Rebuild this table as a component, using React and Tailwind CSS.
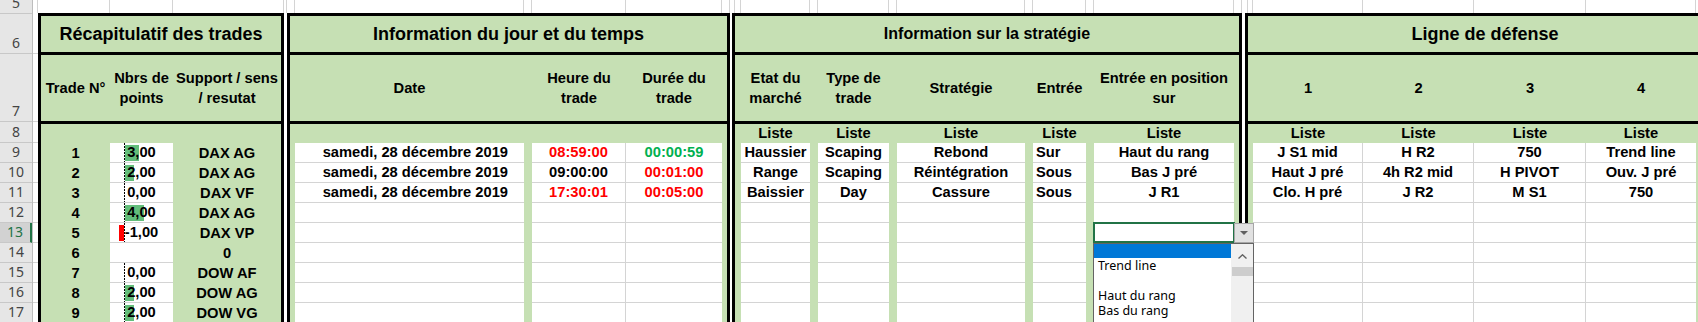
import React from "react";

const rowHeads = [
  ["5", "h-[14px]"],
  ["6", "h-[40px]"],
  ["7", "h-[68px]"],
  ["8", "h-[21px]"],
  ["9", "h-[20px]"],
  ["10", "h-[20px]"],
  ["11", "h-[20px]"],
  ["12", "h-[20px]"],
  ["13", "h-[20px]"],
  ["14", "h-[20px]"],
  ["15", "h-[20px]"],
  ["16", "h-[20px]"],
  ["17", "h-[20px]"],
];

// row 5 cells, one per sheet column
const strip = [
  "w-[5px]", "w-[72px]", "w-[63px]", "w-[111px]", "w-[3px]", "w-[8px]", "w-[229px]", "w-[8px]",
  "w-[94px]", "w-[96px]", "w-[8px]", "w-[5px]", "w-[6px]", "w-[69px]", "w-[8px]", "w-[71px]",
  "w-[8px]", "w-[128px]", "w-[8px]", "w-[53px]", "w-[8px]", "w-[140px]", "w-[8px]", "w-[6px]",
  "w-[5px]", "w-[110px]", "w-[111px]", "w-[112px]", "w-[110px]", "w-[40px]",
];

const trades = [
  [1, 3, "DAX AG"],
  [2, 2, "DAX AG"],
  [3, 0, "DAX VF"],
  [4, 4, "DAX AG"],
  [5, -1, "DAX VP"],
  [6, null, "0"],
  [7, 0, "DOW AF"],
  [8, 2, "DOW AG"],
  [9, 2, "DOW VG"],
];

const red = (t) => <span className="text-[#FF0000]">{t}</span>;
const green = (t) => <span className="text-[#00B050]">{t}</span>;

const empty = (n) => Array.from({ length: n }, () => []);

function PointsCell({ v }) {
  const w = Math.round(Math.abs(v) * 4.7);
  return (
    <>
      <svg className="absolute left-0 top-0" width="63" height="19">
        {v !== 0 && (
          <rect x={v > 0 ? 15 : 14 - w} y="2" width={w} height="16" fill={v > 0 ? "#63BE7B" : "#FF0000"} />
        )}
        <line x1="14.5" y1="0" x2="14.5" y2="19" stroke="#000" strokeDasharray="2 1" />
      </svg>
      <span className="relative">{v.toFixed(2).replace(".", ",")}</span>
    </>
  );
}

function Dropdown() {
  return (
    <>
      <div className="absolute -left-px -top-px w-[142px] h-[21px] border-2 border-[#217346] z-10" />
      <div className="absolute left-[140px] top-0 w-[20px] h-[20px] bg-[#e1e1e1] border border-[#a6a6a6] z-10 flex items-center justify-center">
        <svg width="8" height="5" viewBox="0 0 8 5">
          <path d="M0 0h8L4 4z" fill="#5f5f5f" />
        </svg>
      </div>
      <div className="absolute -left-px top-[20px] w-[161px] h-[110px] bg-white border border-[#646464] z-20 flex font-['Noto_Sans',sans-serif] font-normal text-[12.5px] leading-[15px] text-black">
        <div className="flex-1 flex flex-col">
          <div className="h-[14px] bg-[#0078D7]" />
          <div className="h-[15px] pl-[4px]">Trend line</div>
          <div className="h-[15px]" />
          <div className="h-[15px] pl-[4px]">Haut du rang</div>
          <div className="h-[15px] pl-[4px]">Bas du rang</div>
        </div>
        <div className="w-[22px] bg-[#f0f0f0] flex flex-col items-center pt-[10px]">
          <svg width="9" height="5" viewBox="0 0 9 5">
            <path d="M0.5 4.5L4.5 0.8L8.5 4.5" fill="none" stroke="#606060" strokeWidth="1.4" />
          </svg>
          <div className="mt-[8px] w-[21px] h-[9px] bg-[#cdcdcd]" />
        </div>
      </div>
    </>
  );
}

function Cell({ col, v }) {
  const bg = col.white ? `bg-white border-b border-[#d4d4d4] ${col.sep ? "border-r" : ""}` : "";
  const align = col.left ? "justify-start pl-[3px]" : col.right ? "justify-end pr-[16px]" : "justify-center";
  return (
    <div className={`${col.w} shrink-0 h-[20px] relative flex items-center leading-[19px] whitespace-nowrap ${align} ${bg}`}>
      {v}
    </div>
  );
}

function Section({ boxCls, title, titleCls, cols, heads, liste, rows }) {
  return (
    <div className={`shrink-0 flex flex-col border-[3px] border-black bg-[#C6E0B4] ${boxCls}`}>
      <div className={`h-[39px] shrink-0 flex items-center justify-center border-b-[3px] border-black ${titleCls}`}>
        {title}
      </div>
      <div className="h-[69px] shrink-0 flex border-b-[3px] border-black">
        {cols.map((c, i) => (
          <div key={i} className={`${c.w} shrink-0 flex items-center justify-center text-center leading-[20px] whitespace-nowrap`}>
            {heads[i]}
          </div>
        ))}
      </div>
      <div className="h-[19px] shrink-0 flex">
        {cols.map((c, i) => (
          <div key={i} className={`${c.w} shrink-0 flex items-center justify-center leading-[19px]`}>
            {liste && c.white ? "Liste" : null}
          </div>
        ))}
      </div>
      {rows.map((r, ri) => (
        <div key={ri} className="h-[20px] shrink-0 flex">
          {cols.map((c, i) => (
            <Cell key={i} col={c} v={r[i]} />
          ))}
        </div>
      ))}
    </div>
  );
}

function Gutter({ w }) {
  return (
    <div className={`${w} shrink-0 flex flex-col bg-white`}>
      <div className="h-[41px] border-b border-[#d4d4d4]" />
      <div className="h-[68px] border-b border-[#d4d4d4]" />
      <div className="h-[21px] border-b border-[#d4d4d4]" />
      {Array.from({ length: 9 }).map((_, i) => (
        <div key={i} className="h-[20px] border-b border-[#d4d4d4]" />
      ))}
    </div>
  );
}

const s1Cols = [{ w: "w-[69px]" }, { w: "w-[63px]", white: true }, { w: "w-[108px]" }];

const s2Cols = [
  { w: "w-[5px]" },
  { w: "w-[229px]", white: true, right: true },
  { w: "w-[8px]" },
  { w: "w-[94px]", white: true, sep: true },
  { w: "w-[96px]", white: true },
  { w: "w-[5px]" },
];

const s3Cols = [
  { w: "w-[6px]" },
  { w: "w-[69px]", white: true },
  { w: "w-[8px]" },
  { w: "w-[71px]", white: true },
  { w: "w-[8px]" },
  { w: "w-[128px]", white: true },
  { w: "w-[8px]" },
  { w: "w-[53px]", white: true, left: true },
  { w: "w-[8px]" },
  { w: "w-[140px]", white: true },
  { w: "w-[5px]" },
];

const s4Cols = [
  { w: "w-[5px]" },
  { w: "w-[110px]", white: true, sep: true },
  { w: "w-[111px]", white: true, sep: true },
  { w: "w-[112px]", white: true, sep: true },
  { w: "w-[110px]", white: true },
  { w: "w-[26px]" },
];

const date = "samedi, 28 décembre 2019";

const s2Rows = [
  [null, date, null, red("08:59:00"), green("00:00:59")],
  [null, date, null, "09:00:00", red("00:01:00")],
  [null, date, null, red("17:30:01"), red("00:05:00")],
  ...empty(6),
];

const s3Rows = [
  [null, "Haussier", null, "Scaping", null, "Rebond", null, "Sur", null, "Haut du rang"],
  [null, "Range", null, "Scaping", null, "Réintégration", null, "Sous", null, "Bas J pré"],
  [null, "Baissier", null, "Day", null, "Cassure", null, "Sous", null, "J R1"],
  [],
  [null, null, null, null, null, null, null, null, null, <Dropdown />],
  ...empty(4),
];

const s4Rows = [
  [null, "J S1 mid", "H R2", "750", "Trend line"],
  [null, "Haut J pré", "4h R2 mid", "H PIVOT", "Ouv. J pré"],
  [null, "Clo. H pré", "J R2", "M S1", "750"],
  ...empty(6),
];

export default function App() {
  return (
    <div className="w-[1698px] h-[322px] overflow-hidden bg-white flex font-['Liberation_Sans',Arial,sans-serif] font-bold text-[14.7px] text-black">
      <div className="w-[33px] shrink-0 flex flex-col bg-[#e6e6e6] border-r border-[#bdbdbd]">
        {rowHeads.map(([n, h]) => (
          <div
            key={n}
            className={`${h} shrink-0 flex items-end justify-center pb-[2px] leading-[17px] border-b border-[#c8c8c8] font-['Noto_Sans',sans-serif] font-normal text-[14px] ${
              n === "5" ? "overflow-hidden" : ""
            } ${n === "13" ? "bg-[#d2d2d2] text-[#217346] border-r-2 border-r-[#217346]" : "text-[#444]"}`}
          >
            {n}
          </div>
        ))}
      </div>

      <div className="flex flex-col shrink-0">
        <div className="h-[13px] shrink-0 flex">
          {strip.map((w, i) => (
            <div key={i} className={`${w} shrink-0 border-r border-[#d4d4d4]`} />
          ))}
        </div>
        <div className="flex">
          <Gutter w="w-[5px]" />
          <Section
            boxCls="w-[246px]"
            title="Récapitulatif des trades"
            titleCls="text-[18px]"
            cols={s1Cols}
            heads={[
              "Trade N°",
              <>Nbrs de<br />points</>,
              <>Support / sens<br />/ resutat</>,
            ]}
            rows={trades.map(([n, p, s]) => [n, p === null ? null : <PointsCell v={p} />, s])}
          />
          <div className="w-[3px] shrink-0 bg-white" />
          <Section
            boxCls="w-[443px]"
            title="Information du jour et du temps"
            titleCls="text-[18px]"
            cols={s2Cols}
            heads={[null, "Date", null, <>Heure du<br />trade</>, <>Durée du<br />trade</>, null]}
            rows={s2Rows}
          />
          <div className="w-[2px] shrink-0 bg-white" />
          <Section
            boxCls="w-[510px]"
            title="Information sur la stratégie"
            titleCls="text-[16px]"
            cols={s3Cols}
            heads={[
              null,
              <>Etat du<br />marché</>,
              null,
              <>Type de<br />trade</>,
              null,
              "Stratégie",
              null,
              "Entrée",
              null,
              <>Entrée en position<br />sur</>,
              null,
            ]}
            liste
            rows={s3Rows}
          />
          <div className="w-[3px] shrink-0 bg-white" />
          <Section
            boxCls="w-[480px]"
            title="Ligne de défense"
            titleCls="text-[18px]"
            cols={s4Cols}
            heads={[null, "1", "2", "3", "4", null]}
            liste
            rows={s4Rows}
          />
        </div>
      </div>
    </div>
  );
}
